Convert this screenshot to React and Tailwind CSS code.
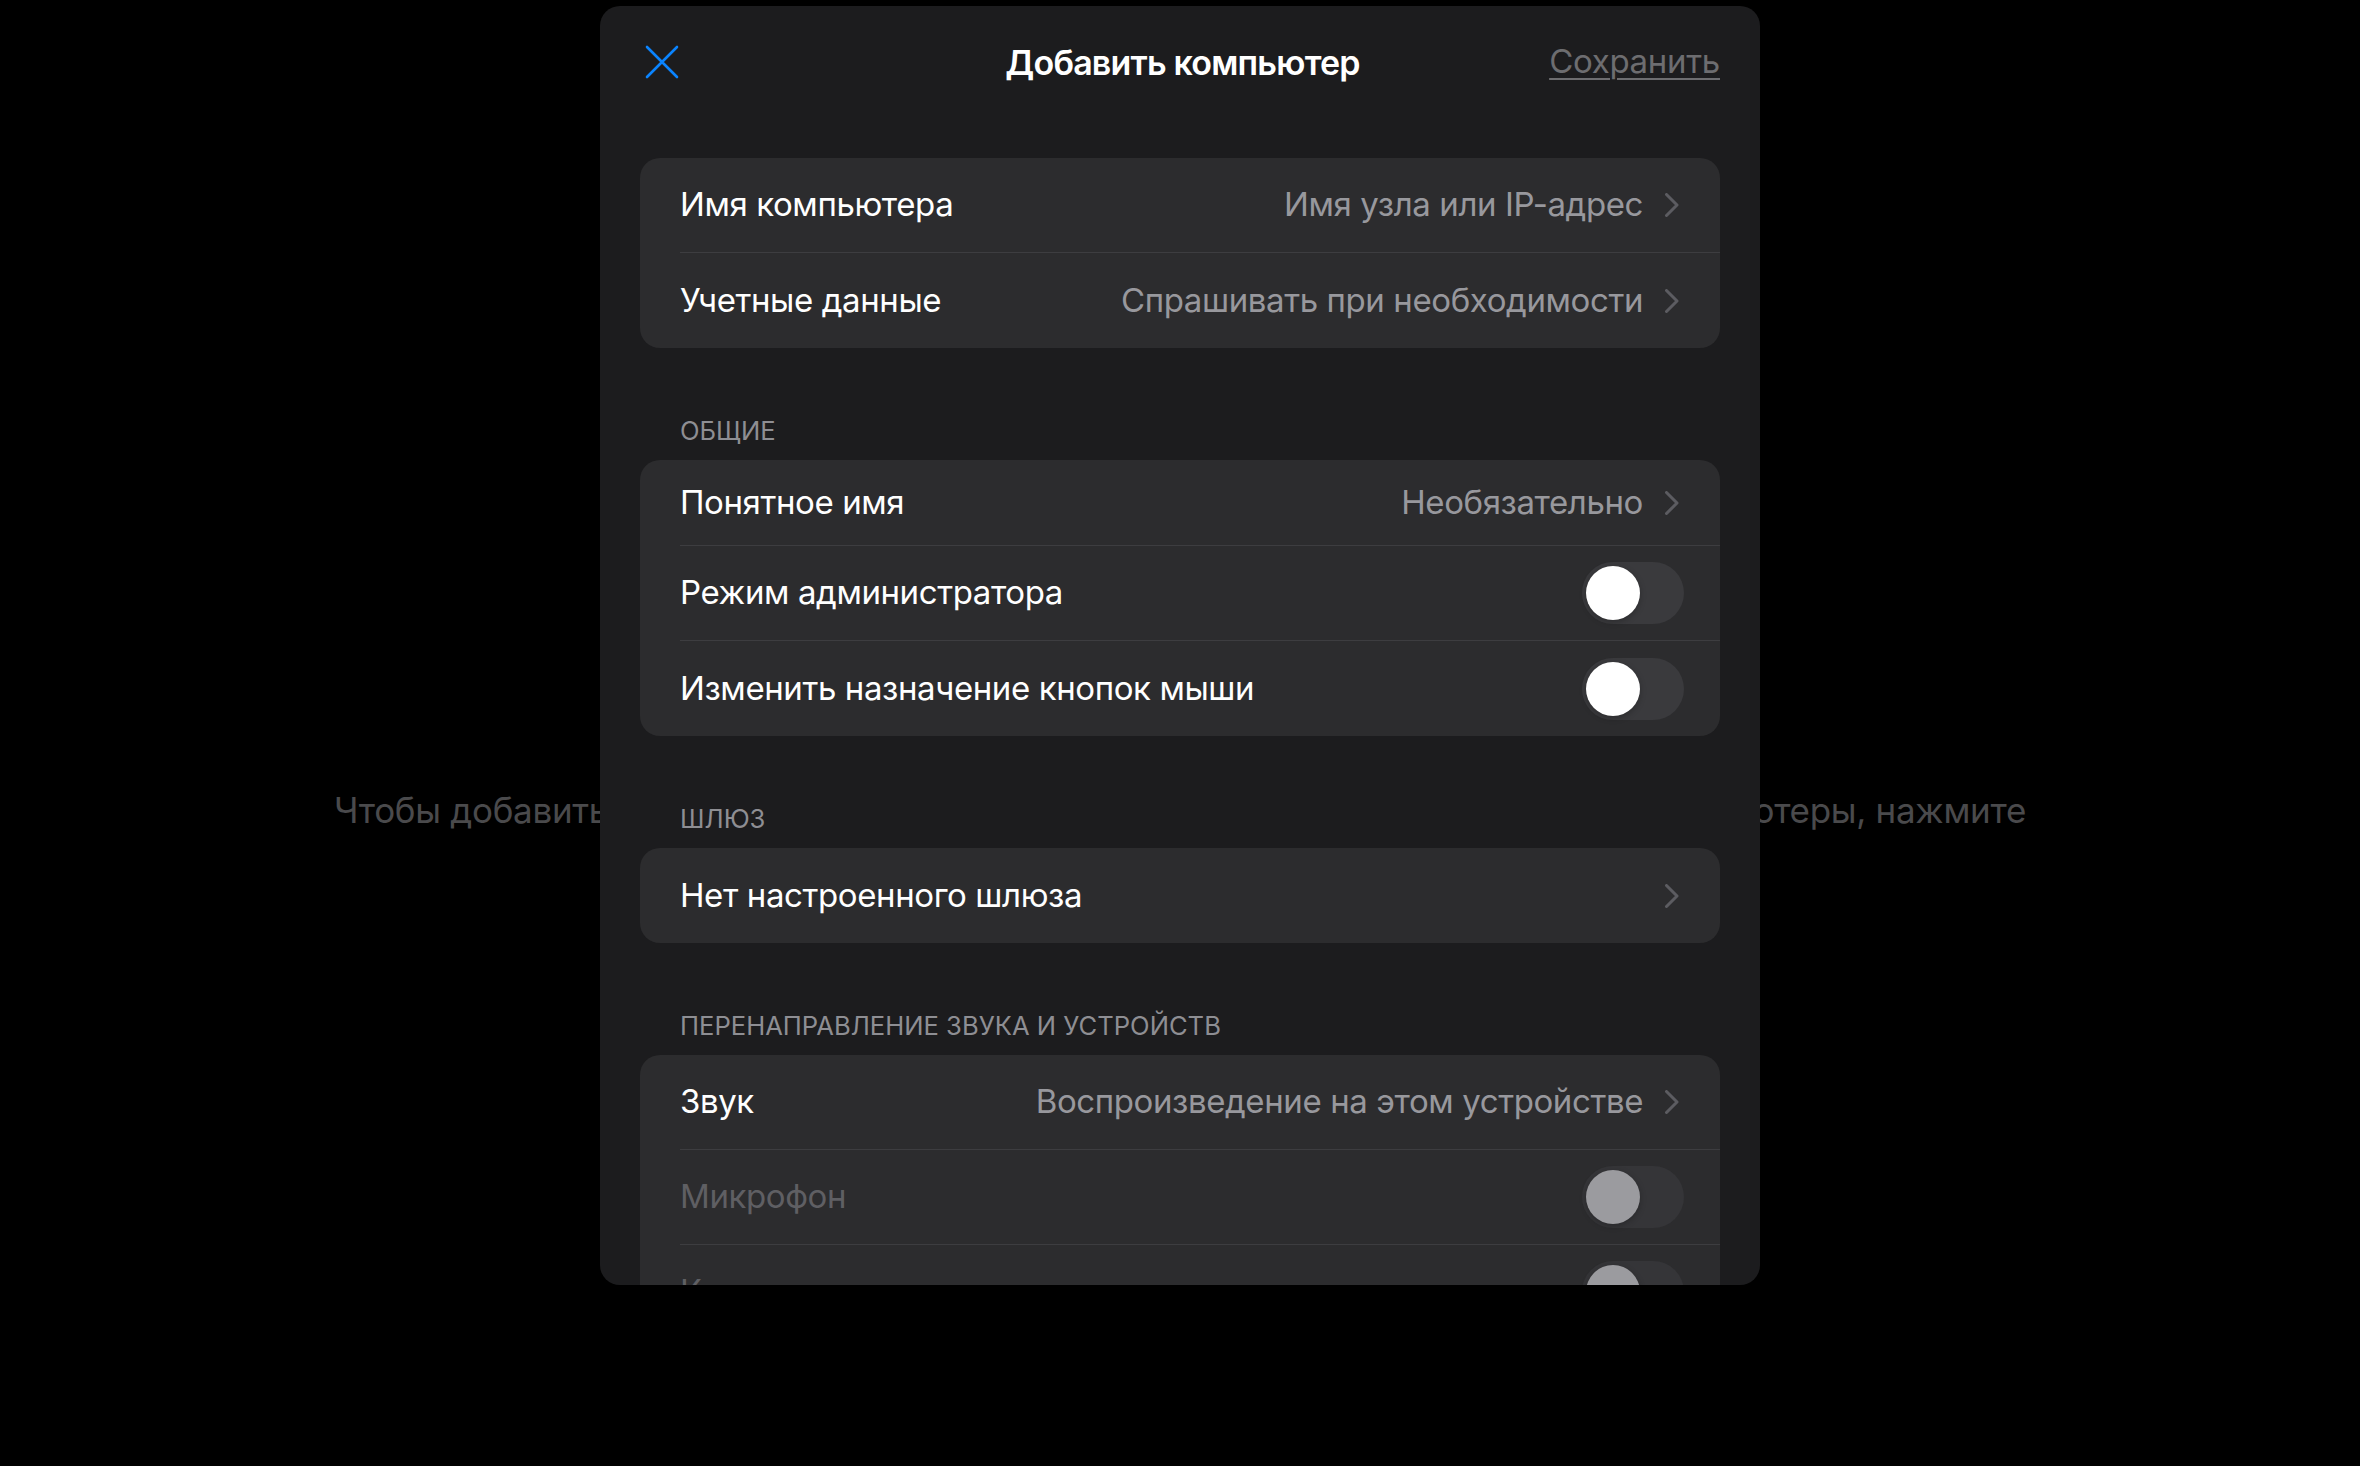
import React from "react";

const Chevron = () => (
  <svg width="14" height="24" viewBox="0 0 14 24" className="shrink-0">
    <path
      d="M1.5 1.5 L12 12 L1.5 22.5"
      fill="none"
      stroke="#5c5c61"
      strokeWidth="3"
      strokeLinecap="round"
      strokeLinejoin="round"
    />
  </svg>
);

const Toggle = ({ disabled }) => (
  <div
    className={
      disabled
        ? "relative w-[102px] h-[62px] shrink-0 rounded-full bg-[#353538]"
        : "relative w-[102px] h-[62px] shrink-0 rounded-full bg-[#3a3a3d]"
    }
  >
    <div
      className={
        disabled
          ? "absolute left-[4px] top-[4px] w-[54px] h-[54px] rounded-full bg-[#9b9b9f] shadow-[0_2px_6px_rgba(0,0,0,0.25)]"
          : "absolute left-[4px] top-[4px] w-[54px] h-[54px] rounded-full bg-white shadow-[0_2px_6px_rgba(0,0,0,0.25)]"
      }
    />
  </div>
);

// строка карточки: подпись слева, значение + шеврон или переключатель справа
const Row = ({ label, value, chevron, toggle, disabled, height, last }) => (
  <div className="pl-10">
    <div
      className={
        (last ? "" : "border-b border-[#3d3d40] ") +
        "flex items-center justify-between " +
        (toggle ? "pr-[36px] " : "pr-[41px] ") +
        height
      }
    >
      <span
        className={
          disabled
            ? "text-[33px] text-[#5f5f63] tracking-[-0.4px]"
            : "text-[33px] text-white tracking-[-0.4px]"
        }
      >
        {label}
      </span>
      <div className="flex items-center gap-[22px]">
        {value && (
          <span className="text-[33px] text-[#98989d] tracking-[-0.4px]">
            {value}
          </span>
        )}
        {chevron && <Chevron />}
        {toggle && <Toggle disabled={disabled} />}
      </div>
    </div>
  </div>
);

const SectionHeader = ({ children }) => (
  <div className="mt-[68px] mb-[14px] px-[80px] h-[30px] leading-[30px] text-[25.6px] text-[#8e8e93] uppercase">
    {children}
  </div>
);

export default function App() {
  return (
    <div className="relative w-full h-[1466px] bg-black overflow-hidden font-['Inter','Noto_Sans',sans-serif]">
      {/* фон: пустой список */}
      <div className="pt-[788px] flex flex-col items-center text-[35px] leading-[44px] text-[#4a4a4c] tracking-[-0.3px]">
        <div className="w-[1692px] flex justify-between whitespace-nowrap">
          <span>Чтобы добавить удаленные ресурсы,</span>
          <span>или компьютеры, нажмите</span>
        </div>
        <div>кнопку «+» вверху экрана.</div>
      </div>

      {/* модальное окно */}
      <div className="absolute top-[6px] left-[600px] w-[1160px] h-[1279px] rounded-[20px] bg-[#1c1c1e] overflow-hidden">
        <div className="grid grid-cols-[1fr_auto_1fr] items-center h-[112px] pl-[45px] pr-[40px]">
          <svg width="34" height="34" viewBox="0 0 34 34">
            <path
              d="M2 2 L32 32 M32 2 L2 32"
              stroke="#0a84ff"
              strokeWidth="2.6"
              strokeLinecap="round"
            />
          </svg>
          <div className="text-[34px] font-semibold text-white tracking-[-0.8px]">
            Добавить компьютер
          </div>
          <div className="justify-self-end text-[33px] text-[#6d6d70] tracking-[-0.3px] underline underline-offset-[5px] decoration-[2px]">
            Сохранить
          </div>
        </div>

        <div className="mt-[40px] mx-10 rounded-[20px] bg-[#2c2c2e]">
          <Row label="Имя компьютера" value="Имя узла или IP-адрес" chevron height="h-[95px]" />
          <Row label="Учетные данные" value="Спрашивать при необходимости" chevron height="h-[95px]" last />
        </div>

        <SectionHeader>Общие</SectionHeader>
        <div className="mx-10 rounded-[20px] bg-[#2c2c2e]">
          <Row label="Понятное имя" value="Необязательно" chevron height="h-[86px]" />
          <Row label="Режим администратора" toggle height="h-[95px]" />
          <Row label="Изменить назначение кнопок мыши" toggle height="h-[95px]" last />
        </div>

        <SectionHeader>Шлюз</SectionHeader>
        <div className="mx-10 rounded-[20px] bg-[#2c2c2e]">
          <Row label="Нет настроенного шлюза" chevron height="h-[95px]" last />
        </div>

        <SectionHeader>Перенаправление звука и устройств</SectionHeader>
        <div className="mx-10 rounded-[20px] bg-[#2c2c2e]">
          <Row label="Звук" value="Воспроизведение на этом устройстве" chevron height="h-[95px]" />
          <Row label="Микрофон" toggle disabled height="h-[95px]" />
          <Row label="Камера" toggle disabled height="h-[95px]" />
          <Row label="Буфер обмена" toggle height="h-[95px]" last />
        </div>
      </div>
    </div>
  );
}
